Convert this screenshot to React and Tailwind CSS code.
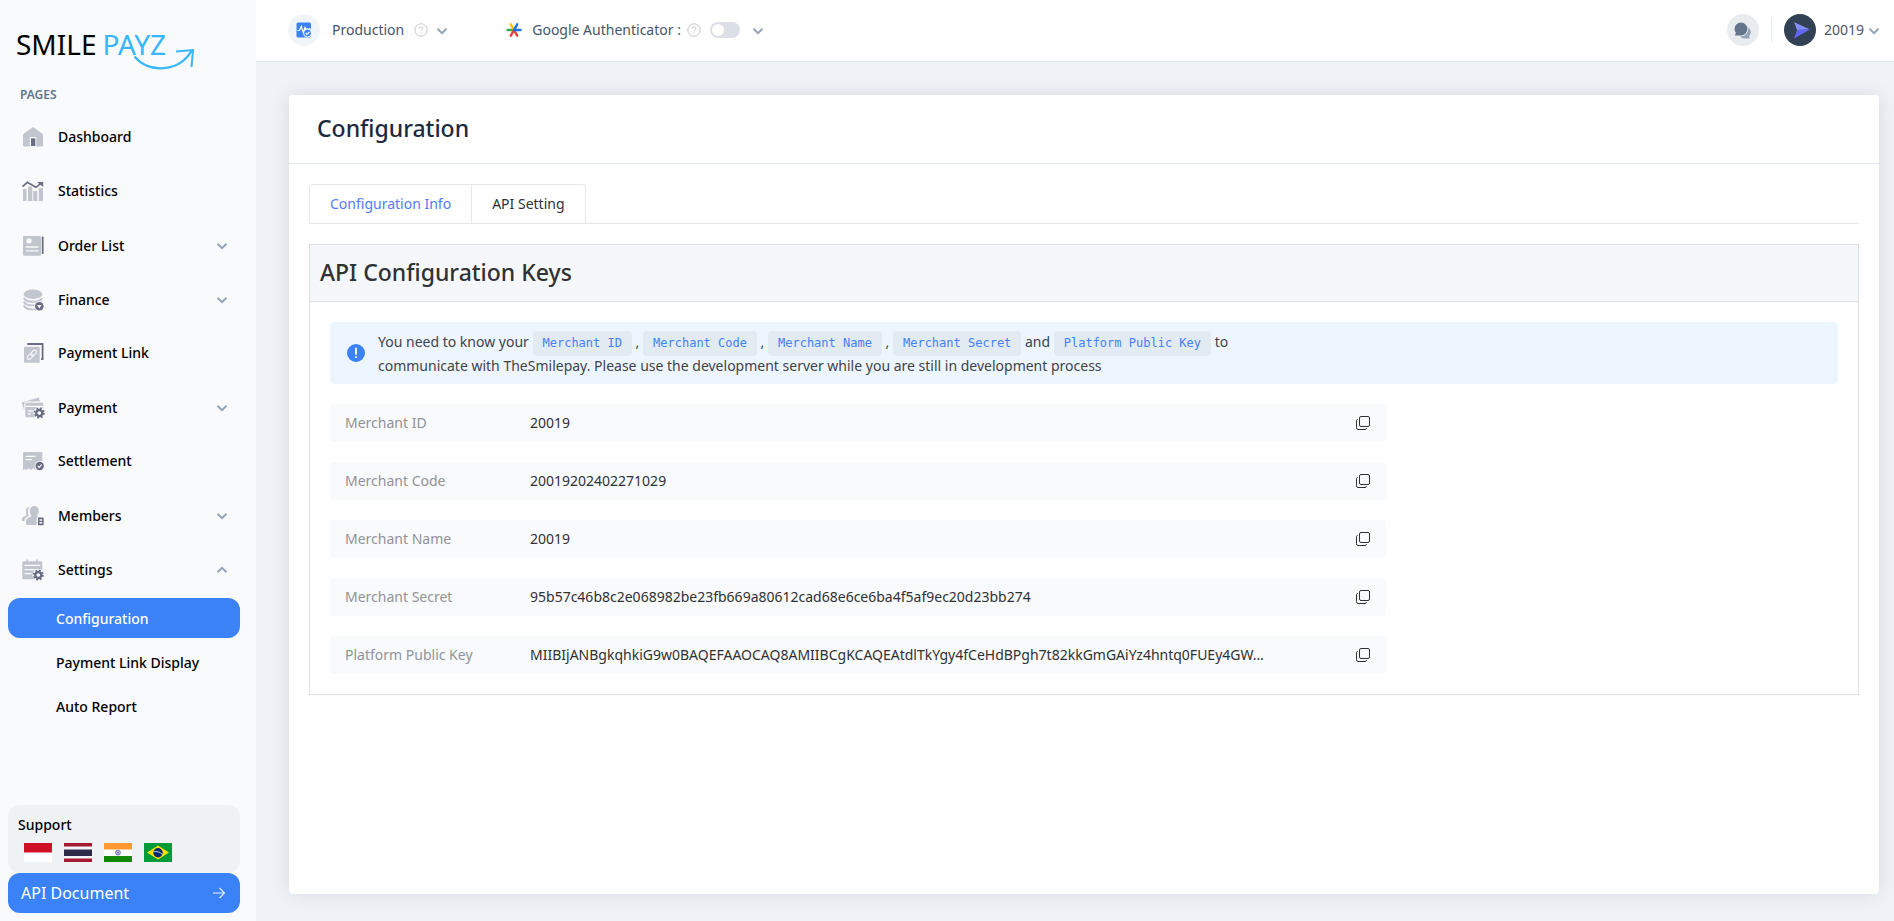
import { useState } from 'react';

const LIGHT = '#c1c5cd';
const DARK = '#696d83';
const BG = '#f8fafc';

function Chevron({ up = false }) {
    return (
        <svg width="12" height="12" viewBox="0 0 12 12" fill="none" aria-hidden="true">
            <path d={up ? 'M1.5 8.2 6 3.8l4.5 4.4' : 'M1.5 3.8 6 8.2l4.5-4.4'} stroke="#94a3b8" strokeWidth="2" />
        </svg>
    );
}

function Gear({ cx, cy }) {
    return (
        <g transform={`translate(${cx} ${cy})`}>
            <circle r="6" fill={BG} />
            <circle r="3" fill="none" stroke={DARK} strokeWidth="2.4" />
            <circle r="4.6" fill="none" stroke={DARK} strokeWidth="1.8" strokeDasharray="1.9 1.71" />
        </g>
    );
}

function NavIcon({ children }) {
    return <svg width="24" height="24" viewBox="0 0 24 24" fill="none" className="shrink-0" aria-hidden="true">{children}</svg>;
}

const icons = {
    dashboard: (
        <NavIcon>
            <path fill={LIGHT} d="M12 2 21 8.4q1 .7 1 2V20q0 1.5-1.5 1.5h-5.2V13q0-1-1-1H9.7q-1 0-1 1v8.5H3.5Q2 21.5 2 20v-9.6q0-1.3 1-2z" />
            <path fill={DARK} d="M10 13.3h4.3V21H10z" />
        </NavIcon>
    ),
    statistics: (
        <NavIcon>
            <path fill={LIGHT} d="M2 10h3.6v12H2zM7 7.5h4.3V22H7zM12.3 12h4v10h-4zM17.8 9H22v13h-4.2z" />
            <path stroke={DARK} strokeWidth="1.7" d="M1.5 7.7 6.3 3.3l8.7 5 5-4" />
            <path fill={DARK} d="M16 3h6.2v5z" />
        </NavIcon>
    ),
    orders: (
        <NavIcon>
            <rect x="2" y="2" width="18" height="19.7" rx="1" fill={LIGHT} />
            <circle cx="8" cy="6.9" r="2.7" fill={BG} />
            <path stroke={BG} strokeWidth="1.3" strokeLinecap="round" d="M5.3 13h11.7M5.3 16.8h11.7" />
            <path stroke={DARK} strokeWidth="1.8" strokeLinecap="round" d="M21.7 3.5v15.7" />
        </NavIcon>
    ),
    finance: (
        <NavIcon>
            <ellipse cx="12" cy="6.3" rx="9.3" ry="4.7" fill={LIGHT} />
            <path stroke={LIGHT} strokeWidth="1.9" d="M3 9.8c1 5.2 17 5.2 18 0M3 13.5c1 5.2 17 5.2 18 0M3 17.2c1 5.2 14 5.2 16 2" />
            <circle cx="18.3" cy="18.3" r="5.1" fill={BG} />
            <circle cx="18.3" cy="18.3" r="4.3" fill={DARK} />
            <path fill={BG} d="M16 17h4.6l-2.3 3.5z" />
        </NavIcon>
    ),
    link: (
        <NavIcon>
            <rect x="3" y="5.7" width="15.7" height="16" rx="1" fill={LIGHT} />
            <path stroke={DARK} strokeWidth="1.8" d="M6.3 3h15.3v15h-1.5" />
            <g stroke={BG} strokeWidth="1.1" transform="rotate(-45 10.8 13.7)">
                <rect x="5" y="11.9" width="6.6" height="3.8" rx="1.9" />
                <rect x="10" y="11.9" width="6.6" height="3.8" rx="1.9" />
            </g>
        </NavIcon>
    ),
    payment: (
        <NavIcon>
            <path fill={LIGHT} d="m.7 6.4 17-5 1.3 4.2H5.5Q3.3 5.8 3.3 8v6.5z" />
            <rect x="4.3" y="6.7" width="18" height="14.6" rx="1.3" fill={LIGHT} />
            <path stroke={BG} strokeWidth="1.3" d="M4.3 10.3h18M6.8 15h5M6.8 18h3" />
            <Gear cx="18.3" cy="17" />
        </NavIcon>
    ),
    settlement: (
        <NavIcon>
            <path fill={LIGHT} d="M2 4.3Q2 3 3.3 3H20q1.3 0 1.3 1.3V19l-2 2-2.3-1.5-2.3 1.5-2.4-1.8L10 21l-2.3-1.8L5.4 21l-1.7-1L2 21z" />
            <path stroke={BG} strokeWidth="1.2" strokeLinecap="round" d="M5 7.3h9M5 10.7h5.5" />
            <circle cx="18.7" cy="17" r="5.1" fill={BG} />
            <circle cx="18.7" cy="17" r="4.2" fill={DARK} />
            <path stroke={BG} strokeWidth="1.2" d="m16.7 17 1.5 1.4 2.5-2.7" />
        </NavIcon>
    ),
    members: (
        <NavIcon>
            <path fill={LIGHT} d="M8.3 3C5.2 3 4.6 6 5.1 9c.2 1.2.6 1.7.2 2.2-.5.7-2.6 1.3-3.6 2.3-.9 1-1 3.5-.8 3.5h2.5c.2-3.3 2.2-4 4.6-5-1.3-2.7-1.5-6 .3-9z" />
            <path fill={LIGHT} d="M13.3 2c3 0 4.6 2.2 4.5 5 0 2-1 3.5-1.5 4.5v1.7q-.6.3-.6 1.3V21H6.3Q4.8 21 5 18.5c.1-3 .8-4 2.8-4.9 1.5-.7 2.5-1 2.5-2-.7-1-1.5-2.6-1.5-4.6 0-2.8 1.5-5 4.5-5z" />
            <path fill={DARK} d="M17 13.5h5l.7 1v6l-.7.8h-5z" />
            <path fill={BG} d="M18.5 15.3h2.7v1.4h-2.7zM18.5 18h2.7v1.4h-2.7z" />
        </NavIcon>
    ),
    settings: (
        <NavIcon>
            <rect x="1.3" y="3.3" width="20" height="18" rx="1.3" fill={LIGHT} />
            <path stroke={LIGHT} strokeWidth="1.8" d="M6.3 1.5v4M16 1.5v4" />
            <path stroke={BG} strokeWidth="1.2" d="M3.5 7.3h15.6M3.5 11.7h15.6M3.5 15.7h7" />
            <Gear cx="17.3" cy="17" />
        </NavIcon>
    ),
};

const navItems = [
    { id: 'dashboard', label: 'Dashboard' },
    { id: 'statistics', label: 'Statistics' },
    { id: 'orders', label: 'Order List', group: true },
    { id: 'finance', label: 'Finance', group: true },
    { id: 'link', label: 'Payment Link' },
    { id: 'payment', label: 'Payment', group: true },
    { id: 'settlement', label: 'Settlement' },
    { id: 'members', label: 'Members', group: true },
    { id: 'settings', label: 'Settings', group: true, open: true },
];

const merchantRows = [
    ['Merchant ID', '20019'],
    ['Merchant Code', '20019202402271029'],
    ['Merchant Name', '20019'],
    ['Merchant Secret', '95b57c46b8c2e068982be23fb669a80612cad68e6ce6ba4f5af9ec20d23bb274'],
    ['Platform Public Key', 'MIIBIjANBgkqhkiG9w0BAQEFAAOCAQ8AMIIBCgKCAQEAtdlTkYgy4fCeHdBPgh7t82kkGmGAiYz4hntq0FUEy4GW…'],
];

function Logo() {
    return (
        <a href="#" className="relative ml-2 mt-[26px] block text-[28px] leading-9 text-black">
            SMILE<span className="ml-1.5 text-[#38b6ff]">PAYZ</span>
            <svg width="64" height="24" viewBox="0 0 64 24" fill="none" className="absolute left-[116px] top-[21px]" aria-hidden="true">
                <path stroke="#38b6ff" strokeWidth="2.3" d="M2.5 9.5c14 17 44 16 57-5.5" />
                <path stroke="#38b6ff" strokeWidth="2" d="M44 4.5 61 3l-1.5 17" />
            </svg>
        </a>
    );
}

function Flags() {
    return (
        <div className="mt-2 ml-1.5 flex gap-3">
            <a href="#" aria-label="Indonesia">
                <svg width="28" height="19" viewBox="0 0 28 19"><path fill="#fff" d="M0 0h28v19H0z" /><path fill="#ce1126" d="M0 0h28v9.5H0z" /></svg>
            </a>
            <a href="#" aria-label="Thailand">
                <svg width="28" height="19" viewBox="0 0 28 19"><path fill="#a51931" d="M0 0h28v19H0z" /><path fill="#f4f5f8" d="M0 3.5h28v12H0z" /><path fill="#2d2a4a" d="M0 6.5h28v6.5H0z" /></svg>
            </a>
            <a href="#" aria-label="India">
                <svg width="28" height="19" viewBox="0 0 28 19"><path fill="#fff" d="M0 0h28v19H0z" /><path fill="#ff9933" d="M0 0h28v6.5H0z" /><path fill="#138808" d="M0 13h28v6H0z" /><circle cx="14" cy="9.7" r="2.4" fill="#c5c5e6" stroke="#5b5bb0" strokeWidth=".8" /><circle cx="14" cy="9.7" r=".8" fill="#3b3b9b" /></svg>
            </a>
            <a href="#" aria-label="Brazil">
                <svg width="28" height="19" viewBox="0 0 28 19"><path fill="#009b3a" d="M0 0h28v19H0z" /><path fill="#fedf00" d="m14 2.5 11 7-11 7-11-7z" /><circle cx="14" cy="9.7" r="4.7" fill="#002776" /><path fill="none" stroke="#cfe0e8" strokeWidth=".9" d="M9.5 8.8c3-.8 6.5 0 8.7 2.5" /></svg>
            </a>
        </div>
    );
}

function Sidebar() {
    return (
        <aside className="flex w-64 shrink-0 flex-col bg-slate-50 px-2 pb-2">
            <Logo />
            <h3 className="mt-[25px] mb-[7px] ml-3 text-xs leading-4 font-semibold text-slate-500">PAGES</h3>
            <nav className="text-sm font-medium text-black">
                <ul>
                    {navItems.map((item) => (
                        <li key={item.id}>
                            {item.group ? (
                                <button type="button" aria-expanded={!!item.open} className="flex h-[54px] w-full items-center gap-[13px] pt-0.5 pl-[13px] pr-5">
                                    {icons[item.id]}
                                    <span className="flex-1 text-left">{item.label}</span>
                                    <Chevron up={item.open} />
                                </button>
                            ) : (
                                <a href="#" className="flex h-[54px] items-center gap-[13px] pl-[13px]">
                                    {icons[item.id]}
                                    <span>{item.label}</span>
                                </a>
                            )}
                        </li>
                    ))}
                </ul>
                <ul className="mt-0.5 mr-2 space-y-1">
                    <li><a href="#" aria-current="page" className="flex h-10 items-center rounded-xl bg-[#3b82f6] pt-0.5 pl-12 text-white">Configuration</a></li>
                    <li><a href="#" className="flex h-10 items-center pt-0.5 pl-12">Payment Link Display</a></li>
                    <li><a href="#" className="flex h-10 items-center pt-0.5 pl-12">Auto Report</a></li>
                </ul>
            </nav>
            <div className="mt-auto mr-2">
                <div className="h-[68px] rounded-xl bg-[#eef2f5] pl-2.5 pt-2.5">
                    <h4 className="text-sm leading-5 font-medium text-black">Support</h4>
                    <Flags />
                </div>
                <a href="#" className="flex h-10 items-center justify-between rounded-xl bg-[#3b82f6] pl-[13px] pr-[15px] text-base text-white">
                    API Document
                    <svg width="12" height="12" viewBox="0 0 12 12" fill="none" stroke="#e5eefe" strokeWidth="1.2" aria-hidden="true"><path d="M0 6h11.2M6.5 1l5 5-5 5" /></svg>
                </a>
            </div>
        </aside>
    );
}

function Help() {
    return (
        <svg width="14" height="14" viewBox="0 0 14 14" fill="none" stroke="#c4c6ca" aria-hidden="true">
            <circle cx="7" cy="7" r="6.2" />
            <path d="M5.2 5.5c0-2.4 3.6-2.3 3.6 0 0 1.3-1.8 1.3-1.8 2.8M7 9.3v1.2" />
        </svg>
    );
}

function Header() {
    const [enabled, setEnabled] = useState(false);
    return (
        <header className="flex h-[62px] items-center border-b border-slate-200 bg-white pb-px pl-8 pr-[14px] text-sm text-slate-600">
            <button type="button" className="flex items-center">
                <span className="flex size-8 items-center justify-center rounded-full bg-slate-100">
                    <svg width="16" height="16" viewBox="0 0 16 16" fill="none" aria-hidden="true">
                        <rect x=".5" y=".5" width="14.5" height="15" rx="1.5" fill="#3b82f6" />
                        <path stroke="#fff" strokeWidth="1.2" d="M1.5 8.5h2L5.3 4.5l2 6 1.7-5 .8 1.5H15" />
                        <circle cx="11.5" cy="11" r="4" fill="#3b82f6" stroke="#fff" strokeWidth="1" />
                        <path stroke="#fff" strokeWidth="1.2" d="m9.6 11 1.4 1.4 2.5-2.5" />
                    </svg>
                </span>
                <span className="ml-3 mr-2.5">Production</span>
                <Help />
                <span className="ml-2 mt-0.5"><Chevron /></span>
            </button>
            <div className="ml-[58px] flex items-center">
                <svg width="16" height="16" viewBox="0 0 16 16" fill="none" strokeWidth="2.4" strokeLinecap="round" aria-hidden="true">
                    <path stroke="#34a853" d="M1.5 8H7" />
                    <path stroke="#fbbc04" d="M4.8 2.3 8 8" />
                    <path stroke="#ea4335" d="m8 8-3.2 5.7M8 8l3.2 5.7" />
                    <path stroke="#1a73e8" d="M8 8h6.5M11.2 2.3 8 8" />
                </svg>
                <label htmlFor="google-auth" className="ml-2.5 mr-1.5">Google Authenticator :</label>
                <Help />
                <input
                    id="google-auth"
                    type="checkbox"
                    role="switch"
                    checked={enabled}
                    onChange={(e) => setEnabled(e.target.checked)}
                    className="ml-[9px] flex h-4 w-[30px] appearance-none items-center rounded-full bg-[#dcdfe6] px-0.5 before:size-3 before:rounded-full before:bg-white checked:justify-end checked:bg-[#3b82f6]"
                />
                <button type="button" aria-label="Authenticator options" className="ml-3 mt-0.5"><Chevron /></button>
            </div>
            <div className="ml-auto flex items-center">
                <button type="button" aria-label="Messages" className="flex size-8 items-center justify-center rounded-full bg-[#e8ecef]">
                    <svg width="17" height="17" viewBox="0 0 17 17" aria-hidden="true">
                        <path fill="#94a3b8" d="M14.3 5.5c3.2 2.5 3 6.3.9 8.3l.6 2.7h-5.2c-2 0-3.5-.8-4.4-2 4.5.2 8.5-3.5 8.1-9z" />
                        <path fill="#64748b" d="M7 .5a6.4 6.4 0 1 1 0 12.9H1l.9-2.7A6.4 6.4 0 0 1 7 .5z" />
                    </svg>
                </button>
                <span className="mx-3 h-6 w-px bg-slate-200" />
                <button type="button" className="flex items-center">
                    <svg width="32" height="32" viewBox="0 0 32 32" aria-hidden="true">
                        <circle cx="16" cy="16" r="16" fill="#334155" />
                        <path fill="#818cf8" d="m10 8 16 7.5L13 16z" />
                        <path fill="#6366f1" d="m26 15.5-16 9L13 16z" />
                    </svg>
                    <span className="ml-2 mr-1">20019</span>
                    <span className="mt-0.5"><Chevron /></span>
                </button>
            </div>
        </header>
    );
}

function Code({ children }) {
    return (
        <code className="inline-block rounded-sm bg-[#e2eaf2] px-2.5 py-1 font-['DejaVu_Sans_Mono',monospace] text-xs leading-[17px] text-[#4581f6]">{children}</code>
    );
}

function InfoRow({ label, value }) {
    return (
        <div className="flex h-[38px] w-[70%] items-center rounded-sm bg-slate-50 pl-[15px] pr-4 text-sm">
            <dt className="w-[185px] shrink-0 text-[#909399]">{label}</dt>
            <dd className="min-w-0 flex-1 truncate text-[#303133]">{value}</dd>
            <button type="button" aria-label={`Copy ${label}`} onClick={() => navigator.clipboard?.writeText(value)}>
                <svg width="14" height="14" viewBox="0 0 14 14" fill="none" stroke="#303133" aria-hidden="true">
                    <rect x="3.5" y=".5" width="10" height="10" rx="1.5" />
                    <path d="M1.7 3.5Q.5 3.5.5 4.7v7Q.5 13.5 2 13.5h7q1.5 0 1.5-1.2" />
                </svg>
            </button>
        </div>
    );
}

export default function App() {
    const [tab, setTab] = useState('info');
    return (
        <div className="flex min-h-screen bg-[#eff3f8] font-['Noto_Sans','Open_Sans',sans-serif]">
            <Sidebar />
            <div className="flex min-w-0 flex-1 flex-col">
                <Header />
                <main className="flex flex-1 flex-col pt-[33px] pr-[15px] pb-[27px] pl-[33px]">
                    <section className="flex-1 rounded-sm bg-white shadow-[0_0_20px_rgba(0,0,0,0.1)]">
                        <h1 className="flex h-[69px] items-center border-b border-slate-200 px-7 pb-0.5 text-[23px] font-medium text-slate-800">Configuration</h1>
                        <div className="px-5 pt-5">
                            <div role="tablist" className="flex border-b border-[#e4e7ed] text-sm">
                                <button type="button" role="tab" aria-selected={tab === 'info'} onClick={() => setTab('info')} className="h-[39px] rounded-tl-sm border border-b-0 border-[#e4e7ed] px-5 text-[#303133] aria-selected:text-[#4f7cf8]">Configuration Info</button>
                                <button type="button" role="tab" aria-selected={tab === 'api'} onClick={() => setTab('api')} className="h-[39px] rounded-tr-sm border border-b-0 border-l-0 border-[#e4e7ed] px-5 text-[#303133] aria-selected:text-[#4f7cf8]">API Setting</button>
                            </div>
                            <div className="mt-5 border border-[#dcdfe6]">
                                <h2 className="flex h-[57px] items-center border-b border-[#dcdfe6] bg-[#f5f7fa] px-2.5 pb-0.5 text-[23px] font-medium text-[#303133]">API Configuration Keys</h2>
                                <div className="space-y-5 p-5">
                                    <div role="note" className="flex min-h-[62px] items-center rounded-sm bg-[#edf6ff] pl-[17px] text-sm text-[#414348]">
                                        <svg width="18" height="18" viewBox="0 0 18 18" className="shrink-0" aria-hidden="true">
                                            <circle cx="9" cy="9" r="9" fill="#3b82f6" />
                                            <path stroke="#fff" strokeWidth="1.8" strokeLinecap="round" d="M9 4.5V10M9 13v.2" />
                                        </svg>
                                        <p className="ml-[13px] leading-5">
                                            You need to know your <Code>Merchant ID</Code> , <Code>Merchant Code</Code> , <Code>Merchant Name</Code> , <Code>Merchant Secret</Code> and <Code>Platform Public Key</Code> to
                                            <br />
                                            communicate with TheSmilepay. Please use the development server while you are still in development process
                                        </p>
                                    </div>
                                    <dl className="space-y-5">
                                        {merchantRows.map(([label, value]) => <InfoRow key={label} label={label} value={value} />)}
                                    </dl>
                                </div>
                            </div>
                        </div>
                    </section>
                </main>
            </div>
        </div>
    );
}
